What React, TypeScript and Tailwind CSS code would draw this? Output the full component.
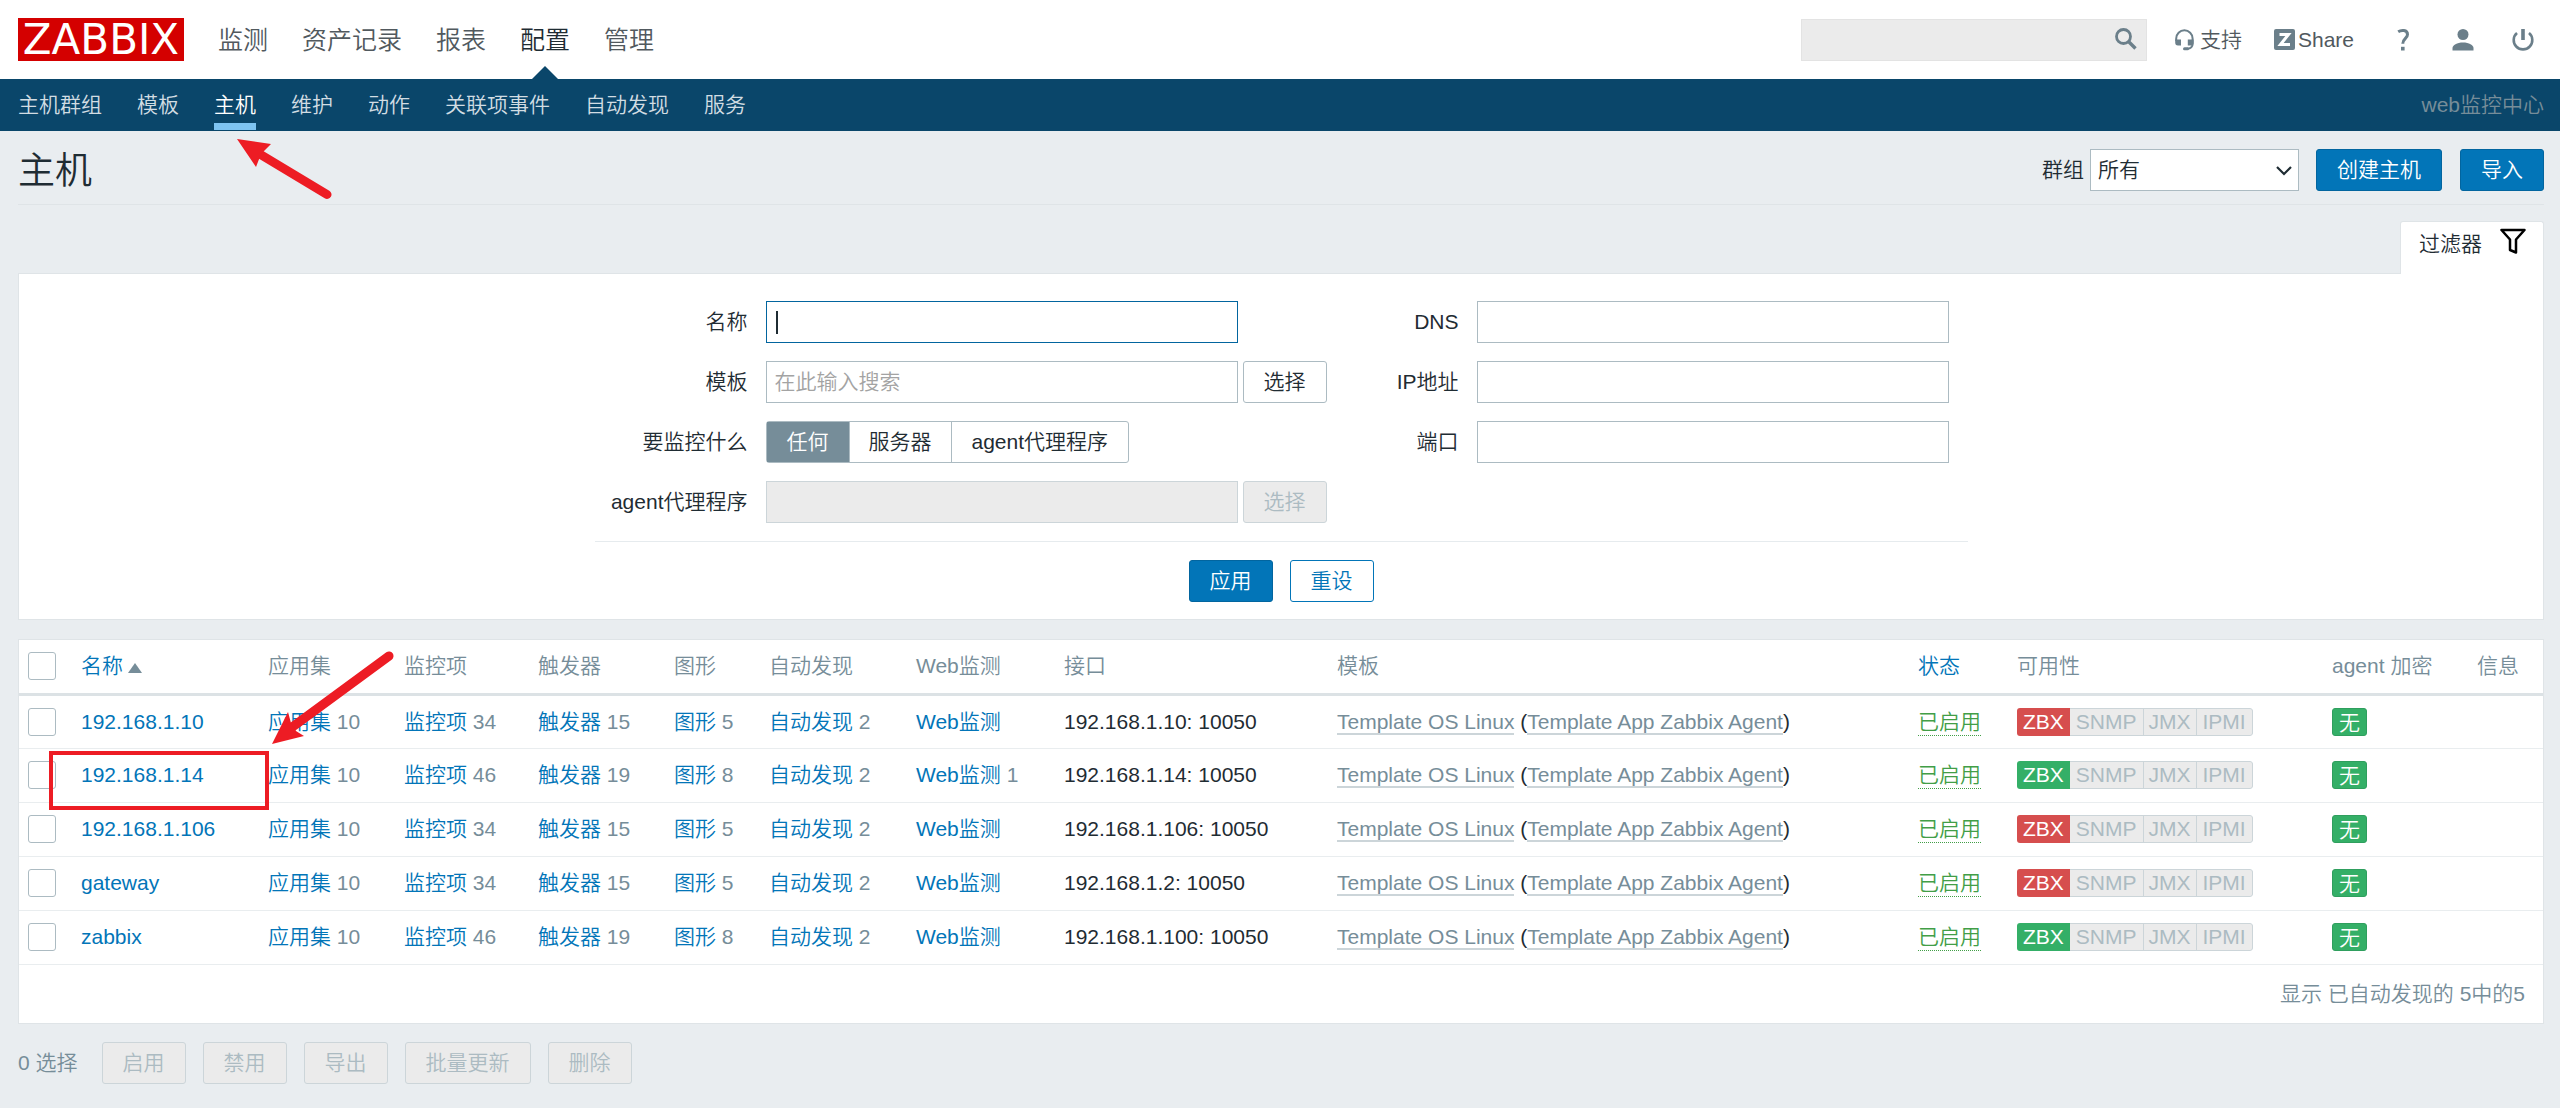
import React, { useState } from 'react';

interface Host {
    name: string;
    items: number;
    triggers: number;
    graphs: number;
    web?: number;
    address: string;
    available: boolean;
}

const MAIN_MENU = ['监测', '资产记录', '报表', '配置', '管理'];
const SUB_MENU = ['主机群组', '模板', '主机', '维护', '动作', '关联项事件', '自动发现', '服务'];
const MONITORED_BY = ['任何', '服务器', 'agent代理程序'];
const BULK_ACTIONS = ['启用', '禁用', '导出', '批量更新', '删除'];

const HOSTS: Host[] = [
    { name: '192.168.1.10', items: 34, triggers: 15, graphs: 5, address: '192.168.1.10: 10050', available: false },
    { name: '192.168.1.14', items: 46, triggers: 19, graphs: 8, web: 1, address: '192.168.1.14: 10050', available: true },
    { name: '192.168.1.106', items: 34, triggers: 15, graphs: 5, address: '192.168.1.106: 10050', available: false },
    { name: 'gateway', items: 34, triggers: 15, graphs: 5, address: '192.168.1.2: 10050', available: false },
    { name: 'zabbix', items: 46, triggers: 19, graphs: 8, address: '192.168.1.100: 10050', available: true },
];

const INPUT = 'block h-[42px] w-[472px] border bg-white px-2 outline-none placeholder:text-[#a3a3a3]';
const PRIMARY = 'h-[42px] rounded-[3px] border border-[#02659f] bg-[#0275b8] px-5 text-white';
const DISABLED = 'h-[42px] shrink-0 rounded-[3px] border border-[#ccd5d9] bg-[#ebebeb] px-5 text-[#acbbc2]';
const CHECKBOX = 'block size-7 appearance-none rounded-[3px] border border-[#acbbc2] bg-white';

const Header: React.FC = () => (
    <header>
        <div className="flex h-[79px] items-center bg-white pl-[18px] pr-[26px]">
            <a href="#" className="mr-[34px] flex h-[43px] w-[166px] items-center justify-center bg-[#d40000] font-['DejaVu_Sans',sans-serif] text-[42px] font-normal leading-[43px] text-white">
                ZABBIX
            </a>
            <nav className="flex h-full items-center gap-[34px] text-[25px] text-[#51595e]">
                {MAIN_MENU.map((item) => (
                    <a key={item} href="#" className={`relative flex h-full items-center ${item === '配置' ? 'text-[#1f2c33]' : ''}`}>
                        {item}
                        {item === '配置' && (
                            <span className="absolute bottom-0 left-1/2 -translate-x-1/2 border-x-[13px] border-b-[13px] border-x-transparent border-b-[#0a466a]" />
                        )}
                    </a>
                ))}
            </nav>
            <div className="ml-auto flex items-center text-[#51595e]">
                <label className="relative mr-7 block">
                    <input type="search" aria-label="搜索" className="block h-[42px] w-[346px] border border-[#e3e3e3] bg-[#ebebeb] px-2 pr-10 outline-none" />
                    <svg className="absolute right-[10px] top-[9px]" width="22" height="22" viewBox="0 0 22 22" fill="none" stroke="#6b7f8a">
                        <circle cx="8.500" cy="8.500" r="7" strokeWidth="2.800" />
                        <path d="M13.500 13.500L20.500 20.500" strokeWidth="3.400" />
                    </svg>
                </label>
                <a href="#" className="mr-8 flex items-center gap-1.5">
                    <svg width="19" height="22" viewBox="0 0 19 22" fill="none" stroke="#6b7f8a">
                        <path d="M1.200 12V9.500a8.200 8.200 0 0 1 16.400 0V15c0 3-2 4.500-5.500 4.800" strokeWidth="2" />
                        <path d="M.2 10.500H6V16.500H3C1 16.500 .2 15.500 .2 13.500ZM18.600 10.500H12.800V16.500H16C18 16.500 18.600 15.500 18.600 13.500Z" fill="#6b7f8a" stroke="none" />
                        <path d="M9.500 19.800H12.500" strokeWidth="3" strokeLinecap="round" />
                    </svg>
                    支持
                </a>
                <a href="#" className="mr-[43px] flex items-center gap-[3px]">
                    <svg width="21" height="21" viewBox="0 0 21 21">
                        <rect width="21" height="21" rx="2" fill="#6b7f8a" />
                        <path d="M5.500 5.500H14.500L6.500 15.500H16" fill="none" stroke="#fff" strokeWidth="3" />
                    </svg>
                    Share
                </a>
                <a href="#" className="mr-[42px]" aria-label="帮助">
                    <svg width="13" height="22" viewBox="0 0 13 22" fill="none" stroke="#6b7f8a" strokeWidth="3">
                        <path d="M1.200 2.800C4 1 10.500 .5 10.500 5.500C10.500 9.500 5.800 9.500 5.800 14.800" />
                        <path d="M5.800 17.800V21.500" strokeWidth="3.600" />
                    </svg>
                </a>
                <a href="#" className="mr-[38px]" aria-label="用户">
                    <svg width="22" height="22" viewBox="0 0 22 22" fill="#6b7f8a">
                        <circle cx="11" cy="5.500" r="5.500" />
                        <path d="M.5 21.500V19C.5 16 5 13.500 11 13.500S21.500 16 21.500 19V21.500Z" />
                    </svg>
                </a>
                <a href="#" aria-label="退出">
                    <svg width="22" height="22" viewBox="0 0 22 22" fill="none" stroke="#6b7f8a" strokeWidth="2.600">
                        <path d="M5 4A9.300 9.300 0 1 0 17 4" />
                        <path d="M11 0V11" strokeWidth="3.600" />
                    </svg>
                </a>
            </div>
        </div>
        <div className="flex h-[52px] items-center bg-[#0a466a] pl-[18px] pr-4 text-[#d2dde3]">
            <nav className="flex h-full items-center gap-[35px]">
                {SUB_MENU.map((item) => (
                    <a key={item} href="#" className={`relative flex h-full items-center ${item === '主机' ? 'text-white' : ''}`}>
                        {item}
                        {item === '主机' && <span className="absolute inset-x-0 bottom-px h-[7px] bg-[#7ec4f2]" />}
                    </a>
                ))}
            </nav>
            <span className="ml-auto text-[#768d99]">web监控中心</span>
        </div>
    </header>
);

const FilterRow: React.FC<{ id?: string; label: string; children: React.ReactNode }> = ({ id, label, children }) => (
    <>
        <label htmlFor={id} className="text-right">{label}</label>
        <div className="flex h-[42px] items-center gap-[5px]">{children}</div>
    </>
);

const Filter: React.FC = () => {
    const [monitored, setMonitored] = useState('任何');

    return (
        <section className="mt-4">
            <div className="flex justify-end">
                <button className="relative -mb-px flex h-[53px] w-36 items-start gap-[18px] rounded-t-[3px] border border-b-0 border-[#dfe4e7] bg-white pl-[18px] pt-1.5">
                    <span className="leading-[32px]">过滤器</span>
                    <svg width="26" height="26" viewBox="0 0 26 26" fill="none" stroke="#000" strokeWidth="2.500">
                        <path d="M1.500 2H24.500L16 11.500V24.500L10 22V11.500Z" strokeLinejoin="round" />
                    </svg>
                </button>
            </div>
            <form className="border border-[#dfe4e7] bg-white pb-[17px] pt-[27px]" onSubmit={(e) => e.preventDefault()}>
                <div className="mx-auto w-[1373px]">
                    <div className="flex items-start justify-between border-b border-[#e6ebee] pb-[18px] pr-[19px]">
                        <div className="grid grid-cols-[153px_auto] items-center gap-x-[18px] gap-y-[18px]">
                            <FilterRow id="name" label="名称">
                                <div className="relative">
                                    <input id="name" type="text" className={`${INPUT} border-[#02659f]`} />
                                    {/* text cursor */}
                                    <span className="absolute left-[10px] top-[10px] h-[23px] w-0.5 bg-[#1f2c33]" />
                                </div>
                            </FilterRow>
                            <FilterRow id="template" label="模板">
                                <input id="template" type="text" placeholder="在此输入搜索" className={`${INPUT} border-[#acbbc2]`} />
                                <button type="button" className="h-[42px] shrink-0 rounded-[3px] border border-[#acbbc2] bg-white px-5">选择</button>
                            </FilterRow>
                            <FilterRow label="要监控什么">
                                {/* segmented radio group */}
                                <div className="flex h-[42px] rounded-[3px] border border-[#acbbc2] bg-white">
                                    {MONITORED_BY.map((option) => (
                                        <label
                                            key={option}
                                            className={`relative flex items-center border-l border-[#acbbc2] px-[19px] first:border-l-0 first:px-5 last:px-5 ${monitored === option ? 'bg-[#768d99] text-white' : ''}`}
                                        >
                                            <input
                                                type="radio"
                                                name="monitored"
                                                className="sr-only"
                                                checked={monitored === option}
                                                onChange={() => setMonitored(option)}
                                            />
                                            {option}
                                        </label>
                                    ))}
                                </div>
                            </FilterRow>
                            <FilterRow id="proxy" label="agent代理程序">
                                <input id="proxy" type="text" disabled className="h-[42px] w-[472px] border border-[#ccd5d9] bg-[#ebebeb]" />
                                <button type="button" disabled className={DISABLED}>选择</button>
                            </FilterRow>
                        </div>
                        <div className="grid grid-cols-[auto_auto] items-center gap-x-[18px] gap-y-[18px]">
                            <FilterRow id="dns" label="DNS"><input id="dns" type="text" className={`${INPUT} border-[#acbbc2]`} /></FilterRow>
                            <FilterRow id="ip" label="IP地址"><input id="ip" type="text" className={`${INPUT} border-[#acbbc2]`} /></FilterRow>
                            <FilterRow id="port" label="端口"><input id="port" type="text" className={`${INPUT} border-[#acbbc2]`} /></FilterRow>
                        </div>
                    </div>
                    <div className="flex justify-center gap-[17px] pt-[18px]">
                        <button type="submit" className={PRIMARY}>应用</button>
                        <button type="reset" className="h-[42px] rounded-[3px] border border-[#0275b8] bg-white px-5 text-[#0275b8]">重设</button>
                    </div>
                </div>
            </form>
        </section>
    );
};

const CountLink: React.FC<{ label: string; count?: number }> = ({ label, count }) => (
    <td>
        <a href="#" className="text-[#0275b8]">{label}</a>
        {count !== undefined && <span className="text-[#768d99]"> {count}</span>}
    </td>
);

const HostRow: React.FC<{ host: Host }> = ({ host }) => (
    <tr className="h-[54px] border-b border-[#e9edef]">
        <td className="pl-[9px]">
            <input type="checkbox" aria-label={host.name} className={CHECKBOX} />
        </td>
        <td>
            {host.name === '192.168.1.14' ? (
                <span className="relative">
                    <a href="#" className="text-[#0275b8]">{host.name}</a>
                    <Highlight />
                </span>
            ) : (
                <a href="#" className="text-[#0275b8]">{host.name}</a>
            )}
        </td>
        <CountLink label="应用集" count={10} />
        <CountLink label="监控项" count={host.items} />
        <CountLink label="触发器" count={host.triggers} />
        <CountLink label="图形" count={host.graphs} />
        <CountLink label="自动发现" count={2} />
        <CountLink label="Web监测" count={host.web} />
        <td>{host.address}</td>
        <td>
            <a href="#" className="border-b-2 border-[#ccd5d9] text-[#768d99]">Template OS Linux</a>
            {' ('}
            <a href="#" className="border-b-2 border-[#ccd5d9] text-[#768d99]">Template App Zabbix Agent</a>
            )
        </td>
        <td>
            <a href="#" className="inline-block border-b border-dotted border-[#429e47] leading-[26px] text-[#429e47]">已启用</a>
        </td>
        <td>
            <div className="flex h-7 w-fit items-stretch overflow-hidden rounded-[3px] text-[#acbbc2]">
                <span className={`px-1.5 leading-[27px] text-white ${host.available ? 'bg-[#34af67]' : 'bg-[#d64e4e]'}`}>ZBX</span>
                <span className="border-y border-r border-[#ccd5d9] bg-[#ebebeb] px-1.5 leading-[25px]">SNMP</span>
                <span className="border-y border-r border-[#ccd5d9] bg-[#ebebeb] px-[5px] leading-[25px]">JMX</span>
                <span className="rounded-r-[3px] border-y border-r border-[#ccd5d9] bg-[#ebebeb] px-1.5 leading-[25px]">IPMI</span>
            </div>
        </td>
        <td>
            <span className="block h-7 w-fit rounded-[3px] border border-[#2f9f5e] bg-[#34af67] px-1.5 leading-[27px] text-white">无</span>
        </td>
        <td />
    </tr>
);

// Red frame and arrow laid over the highlighted host
const Highlight: React.FC = () => (
    <>
        <span className="pointer-events-none absolute -left-8 -top-3 h-[59px] w-[220px] border-4 border-[#ed1c24]" />
        <svg className="pointer-events-none absolute -top-[114px] left-[190px]" width="124" height="98" viewBox="0 0 124 98">
            <path d="M118 7L20 79" stroke="#ed1c24" strokeWidth="9" strokeLinecap="round" />
            <path d="M1 95L17 63L20 74L25 82L33 87Z" fill="#ed1c24" />
        </svg>
    </>
);

export default function App() {
    return (
        <div className="min-h-screen bg-[#e9edf0] font-['Liberation_Sans','Noto_Sans_CJK_SC',sans-serif] text-[21px] font-[350] leading-[28px] text-[#1f2c33]">
            <Header />
            <main className="pl-[18px] pr-4">
                <div className="relative flex h-[74px] items-center border-b border-[#dfe4e7] pt-[5px]">
                    <h1 className="pt-1 text-[37px] leading-[48px]">主机</h1>
                    {/* arrow pointing at the active tab */}
                    <svg className="pointer-events-none absolute left-[218px] top-[7px]" width="98" height="66" viewBox="0 0 98 66">
                        <path d="M91 56.500L22 15" stroke="#ed1c24" strokeWidth="9" strokeLinecap="round" />
                        <path d="M1 1L35 6L25 16L20 29Z" fill="#ed1c24" />
                    </svg>
                    <div className="ml-auto flex items-center">
                        <label htmlFor="group" className="mr-1.5">群组</label>
                        <div className="relative mr-[17px]">
                            <select id="group" className="block h-[42px] w-[209px] appearance-none border border-[#acbbc2] bg-white px-[7px]">
                                <option>所有</option>
                            </select>
                            <svg className="pointer-events-none absolute right-[7px] top-[17px]" width="16" height="10" viewBox="0 0 16 10" fill="none" stroke="#1f2c33" strokeWidth="2.200">
                                <path d="M1 1L8 8L15 1" />
                            </svg>
                        </div>
                        <button className={`${PRIMARY} mr-[18px]`}>创建主机</button>
                        <button className={PRIMARY}>导入</button>
                    </div>
                </div>

                <Filter />

                <div className="mt-[19px] border border-[#dfe4e7] bg-white">
                    <table className="w-full table-fixed border-collapse text-left">
                        <colgroup>
                            <col className="w-[62px]" />
                            <col className="w-[187px]" />
                            <col className="w-[136px]" />
                            <col className="w-[134px]" />
                            <col className="w-[136px]" />
                            <col className="w-[95px]" />
                            <col className="w-[147px]" />
                            <col className="w-[148px]" />
                            <col className="w-[273px]" />
                            <col />
                            <col className="w-[99px]" />
                            <col className="w-[315px]" />
                            <col className="w-[145px]" />
                            <col className="w-[66px]" />
                        </colgroup>
                        <thead>
                            <tr className="h-[54px] border-b-[3px] border-[#dce2e5] text-[#768d99] [&>th]:font-[350]">
                                <th className="pl-[9px]"><input type="checkbox" aria-label="全选" className={CHECKBOX} /></th>
                                <th>
                                    <a href="#" className="flex items-center gap-[5px] text-[#0275b8]">
                                        名称
                                        <span className="mt-1 border-x-[7px] border-b-[10px] border-x-transparent border-b-[#768d99]" />
                                    </a>
                                </th>
                                <th>应用集</th>
                                <th>监控项</th>
                                <th>触发器</th>
                                <th>图形</th>
                                <th>自动发现</th>
                                <th>Web监测</th>
                                <th>接口</th>
                                <th>模板</th>
                                <th><a href="#" className="text-[#0275b8]">状态</a></th>
                                <th>可用性</th>
                                <th>agent 加密</th>
                                <th>信息</th>
                            </tr>
                        </thead>
                        <tbody>
                            {HOSTS.map((host) => <HostRow key={host.name} host={host} />)}
                        </tbody>
                    </table>
                    <div className="flex h-[58px] items-center justify-end pr-[18px] text-[#768d99]">显示 已自动发现的 5中的5</div>
                </div>

                <div className="mt-[18px] flex items-center gap-[17px] pb-[26px] text-[#768d99]">
                    <span className="mr-[7px]">0 选择</span>
                    {BULK_ACTIONS.map((action) => (
                        <button key={action} disabled className={DISABLED}>{action}</button>
                    ))}
                </div>
            </main>
        </div>
    );
}
